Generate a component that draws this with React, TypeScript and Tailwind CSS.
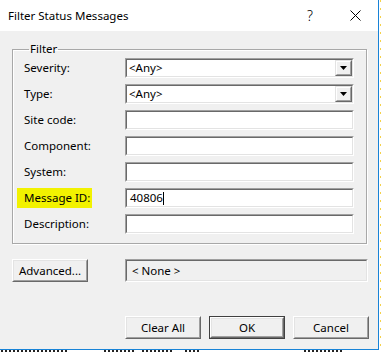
import React from 'react';

const font = "font-['Segoe_UI','Noto_Sans',sans-serif]";

// classic sunken 3D frame (edit / combo box)
const Sunken: React.FC<{ className?: string; children?: React.ReactNode; inner?: string }> = ({
  className = '',
  children,
  inner = 'bg-white',
}) => (
  <div
    className={`border border-t-[#a0a0a0] border-l-[#a0a0a0] border-r-white border-b-white ${className}`}
  >
    <div
      className={`h-full w-full border border-t-[#696969] border-l-[#696969] border-r-[#e3e3e3] border-b-[#e3e3e3] flex items-center ${inner}`}
    >
      {children}
    </div>
  </div>
);

const Combo: React.FC<{ value: string }> = ({ value }) => (
  <Sunken className="h-[20px] w-[229px]">
    <span className="pl-[2px] flex-1 leading-none">{value}</span>
    <div className="h-[16px] w-[17px] border border-t-[#e3e3e3] border-l-[#e3e3e3] border-r-[#696969] border-b-[#696969]">
      <div className="h-full w-full border border-t-white border-l-white border-r-[#a0a0a0] border-b-[#a0a0a0] bg-[#f0f0f0] flex items-center justify-center">
        <svg width="7" height="4" viewBox="0 0 7 4">
          <path d="M0 0H7L3.5 4Z" fill="#000" />
        </svg>
      </div>
    </div>
  </Sunken>
);

const Edit: React.FC<{ value?: string; caret?: boolean }> = ({ value, caret }) => (
  <Sunken className="h-[20px] w-[229px]">
    {value && (
      <span className="pl-[3px] leading-none flex items-center">
        {value}
        {caret && <span className="inline-block w-px h-[13px] bg-black" />}
      </span>
    )}
  </Sunken>
);

const Button: React.FC<{ label: string; isDefault?: boolean; className?: string }> = ({
  label,
  isDefault,
  className = '',
}) => (
  <div className={`h-[23px] ${isDefault ? 'border border-[#404040]' : ''} ${className}`}>
    <div className="h-full w-full border border-t-white border-l-white border-r-[#696969] border-b-[#696969]">
      <div className="h-full w-full border border-t-[#e3e3e3] border-l-[#e3e3e3] border-r-[#a0a0a0] border-b-[#a0a0a0] bg-[#f0f0f0] flex items-center justify-center">
        {label}
      </div>
    </div>
  </div>
);

const rows: { label: string; kind: 'combo' | 'edit'; value?: string; highlight?: boolean }[] = [
  { label: 'Severity:', kind: 'combo', value: '<Any>' },
  { label: 'Type:', kind: 'combo', value: '<Any>' },
  { label: 'Site code:', kind: 'edit' },
  { label: 'Component:', kind: 'edit' },
  { label: 'System:', kind: 'edit' },
  { label: 'Message ID:', kind: 'edit', value: '40806', highlight: true },
  { label: 'Description:', kind: 'edit' },
];

export default function App() {
  return (
    <div className={`w-[381px] h-[352px] bg-white flex overflow-hidden text-[11.5px] text-black ${font}`}>
      <div className="w-[379px] flex flex-col">
        <div className="h-[350px] bg-[#f0f0f0] border-r border-b border-[#1883d7] flex flex-col">
          {/* title bar */}
          <div className="h-[31px] bg-white flex items-center shrink-0">
            <span className="pl-[8px] flex-1 text-[11.5px]">Filter Status Messages</span>
            <span className="w-[46px] text-center text-[14px] font-light">?</span>
            <span className="w-[45px] flex justify-center">
              <svg width="11" height="11" viewBox="0 0 11 11">
                <path d="M0.5 0.5L10.5 10.5M10.5 0.5L0.5 10.5" stroke="#000" strokeWidth="1" />
              </svg>
            </span>
          </div>

          {/* filter group */}
          <fieldset className="ml-[12px] mt-[10px] w-[355px] border border-[#a8a8a8] shadow-[inset_1px_1px_0_white,1px_1px_0_white] pl-[11px] pr-[11px] pb-[9px] pt-[1px]">
            <legend className="ml-[5px] px-[1px] leading-[16px]">Filter</legend>
            <div className="flex flex-col gap-[6px]">
              {rows.map((r) => (
                <div key={r.label} className="flex items-center h-[20px]">
                  <div className="w-[101px]">
                    {r.highlight ? (
                      <span className="inline-block -ml-[7px] pl-[7px] pr-[2px] py-[1px] bg-[#f2f200]">
                        {r.label}
                      </span>
                    ) : (
                      r.label
                    )}
                  </div>
                  {r.kind === 'combo' ? (
                    <Combo value={r.value ?? ''} />
                  ) : (
                    <Edit value={r.value} caret={r.highlight} />
                  )}
                </div>
              ))}
            </div>
          </fieldset>

          {/* advanced */}
          <div className="flex items-center mt-[15px] pl-[12px]">
            <Button label="Advanced..." className="w-[76px]" />
            <Sunken className="ml-[37px] h-[23px] w-[243px]" inner="bg-[#f0f0f0]">
              <span className="pl-[5px] leading-none">&lt; None &gt;</span>
            </Sunken>
          </div>

          {/* dialog buttons */}
          <div className="flex mt-[34px] pl-[125px] gap-[8px]">
            <Button label="Clear All" className="w-[76px]" />
            <Button label="OK" isDefault className="w-[76px]" />
            <Button label="Cancel" className="w-[76px]" />
          </div>
        </div>
        {/* desktop behind the dialog */}
        <div className="h-[2px] flex gap-[3px] pl-[1px]">
          <div className="w-[68px] bg-[repeating-linear-gradient(90deg,#222_0,#222_2px,transparent_2px,transparent_4px)]" />
          <div className="ml-[32px] w-[30px] bg-[repeating-linear-gradient(90deg,#222_0,#222_2px,transparent_2px,transparent_4px)]" />
          <div className="ml-[5px] w-[30px] bg-[repeating-linear-gradient(90deg,#222_0,#222_2px,transparent_2px,transparent_4px)]" />
          <div className="ml-[10px] w-[16px] bg-[repeating-linear-gradient(90deg,#222_0,#222_2px,transparent_2px,transparent_4px)]" />
          <div className="ml-[100px] w-[40px] bg-[repeating-linear-gradient(90deg,#222_0,#222_2px,transparent_2px,transparent_4px)]" />
        </div>
      </div>
      <div className="w-[2px] flex flex-col pl-[1px]">
        <div className="flex-1 w-px bg-[repeating-linear-gradient(180deg,#f5d24a_0,#f5d24a_2px,transparent_2px,transparent_8px)]" />
      </div>
    </div>
  );
}
